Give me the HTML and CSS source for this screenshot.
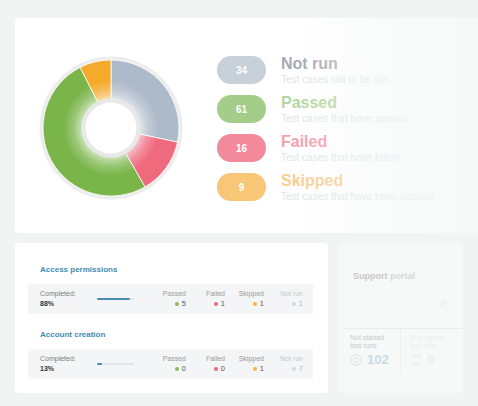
FILE: index.html
```html
<!DOCTYPE html>
<html lang="en">
<head>
<meta charset="utf-8">
<title>Test run overview</title>
<link rel="stylesheet" href="styles.css">
</head>
<body>
<div class="page">
  <section class="card summary">
    <div class="donut">
      <svg width="144" height="144" viewBox="0 0 144 144">
        <defs>
          <radialGradient id="glow" cx="72" cy="72" r="68" gradientUnits="userSpaceOnUse">
            <stop offset="0.43" stop-color="#fff" stop-opacity="0.6"/>
            <stop offset="0.55" stop-color="#fff" stop-opacity="0.25"/>
            <stop offset="0.70" stop-color="#fff" stop-opacity="0"/>
          </radialGradient>
        </defs>
        <circle cx="72" cy="72" r="71.5" fill="#ededed"/>
        <g stroke="#ffffff" stroke-width="0.8" stroke-linejoin="round">
          <path d="M72 72 L72 4 A68 68 0 0 1 138.51 86.14 Z" fill="#adbac9"/>
          <path d="M72 72 L138.51 86.14 A68 68 0 0 1 106 130.89 Z" fill="#f06a7d"/>
          <path d="M72 72 L106 130.89 A68 68 0 1 1 41.13 11.41 Z" fill="#7ab54a"/>
          <path d="M72 72 L41.13 11.41 A68 68 0 0 1 72 4 Z" fill="#f5aa2c"/>
        </g>
        <circle cx="72" cy="72" r="68" fill="url(#glow)"/>
        <circle cx="72" cy="72" r="29.8" fill="#e8e8e8"/>
        <circle cx="72" cy="72" r="25.5" fill="#ffffff"/>
      </svg>
    </div>
    <ul class="legend">
      <li class="legend-item">
        <span class="pill pill-notrun">34</span>
        <div class="legend-text">
          <div class="legend-title title-notrun">Not run</div>
          <div class="legend-sub">Test cases still to be run</div>
        </div>
      </li>
      <li class="legend-item">
        <span class="pill pill-passed">61</span>
        <div class="legend-text">
          <div class="legend-title title-passed">Passed</div>
          <div class="legend-sub">Test cases that have passed</div>
        </div>
      </li>
      <li class="legend-item">
        <span class="pill pill-failed">16</span>
        <div class="legend-text">
          <div class="legend-title title-failed">Failed</div>
          <div class="legend-sub">Test cases that have failed</div>
        </div>
      </li>
      <li class="legend-item">
        <span class="pill pill-skipped">9</span>
        <div class="legend-text">
          <div class="legend-title title-skipped">Skipped</div>
          <div class="legend-sub">Test cases that have been skipped</div>
        </div>
      </li>
    </ul>
    <div class="fade"></div>
  </section>

  <div class="bottom">
    <section class="card runs">
      <div class="group">
        <h3 class="group-title">Access permissions</h3>
        <div class="row">
          <div class="completed">
            <div class="completed-label">Completed:</div>
            <div class="completed-value">88%</div>
          </div>
          <div class="bar"><div class="bar-fill" style="width:88%"></div></div>
          <div></div>
          <div class="stat"><div class="stat-label">Passed</div><div class="stat-value"><i class="dot dot-passed"></i>5</div></div>
          <div class="stat"><div class="stat-label">Failed</div><div class="stat-value"><i class="dot dot-failed"></i>1</div></div>
          <div class="stat"><div class="stat-label">Skipped</div><div class="stat-value"><i class="dot dot-skipped"></i>1</div></div>
          <div class="stat stat-faint"><div class="stat-label">Not run</div><div class="stat-value"><i class="dot dot-notrun"></i>1</div></div>
        </div>
      </div>
      <div class="group">
        <h3 class="group-title">Account creation</h3>
        <div class="row">
          <div class="completed">
            <div class="completed-label">Completed:</div>
            <div class="completed-value">13%</div>
          </div>
          <div class="bar"><div class="bar-fill" style="width:13%"></div></div>
          <div></div>
          <div class="stat"><div class="stat-label">Passed</div><div class="stat-value"><i class="dot dot-passed"></i>0</div></div>
          <div class="stat"><div class="stat-label">Failed</div><div class="stat-value"><i class="dot dot-failed"></i>0</div></div>
          <div class="stat"><div class="stat-label">Skipped</div><div class="stat-value"><i class="dot dot-skipped"></i>1</div></div>
          <div class="stat stat-faint"><div class="stat-label">Not run</div><div class="stat-value"><i class="dot dot-notrun"></i>7</div></div>
        </div>
      </div>
    </section>

    <section class="card portal">
      <div class="portal-head">
        <h3 class="portal-title">Support <span class="portal-title-fade">portal</span></h3>
        <svg class="star" width="12" height="12" viewBox="0 0 12 12"><path d="M6 0.8 L7.6 4.2 L11.2 4.6 L8.5 7 L9.3 10.7 L6 8.8 L2.7 10.7 L3.5 7 L0.8 4.6 L4.4 4.2 Z" fill="#f0f1f2"/></svg>
      </div>
      <div class="portal-stats">
        <div class="pstat">
          <div class="pstat-label">Not started<br>test runs</div>
          <div class="pstat-value">
            <svg width="12" height="12" viewBox="0 0 12 12"><circle cx="6" cy="6" r="5.2" fill="none" stroke="#dce0e3" stroke-width="1"/><circle cx="6" cy="6" r="2.2" fill="none" stroke="#dce0e3" stroke-width="1"/></svg>
            <span class="pstat-num">102</span>
          </div>
        </div>
        <div class="pstat pstat-faint">
          <div class="pstat-label">In progress<br>test runs</div>
          <div class="pstat-value">
            <svg width="12" height="12" viewBox="0 0 12 12"><path d="M10.5 5 A4.6 4.6 0 0 0 2 3.6 M1.5 7 A4.6 4.6 0 0 0 10 8.4" fill="none" stroke="#eceeef" stroke-width="1.2"/></svg>
            <span class="pstat-num">9</span>
          </div>
        </div>
      </div>
    </section>
  </div>
</div>
</body>
</html>
```

FILE: styles.css
```css
* { box-sizing: border-box; }

html, body {
  margin: 0;
  padding: 0;
}

body {
  width: 478px;
  height: 406px;
  overflow: hidden;
  background: #f2f3f3;
  font-family: "Liberation Sans", Arial, Helvetica, sans-serif;
}

.page {
  padding: 18px 0 0 15px;
}

.card {
  background: #ffffff;
  border-radius: 4px;
}

/* ---------- summary card ---------- */
.summary {
  position: relative;
  width: 463px;
  height: 215px;
  display: flex;
  align-items: flex-start;
  padding: 38px 0 0 24px;
  gap: 34px;
  border-radius: 4px 0 0 4px;
  overflow: hidden;
}

.donut {
  width: 144px;
  height: 144px;
  flex: none;
}

.donut svg { display: block; }

.legend {
  list-style: none;
  margin: 0;
  padding: 0;
  display: flex;
  flex-direction: column;
  gap: 11px;
}

.legend-item {
  display: flex;
  align-items: flex-start;
  gap: 15px;
  height: 28px;
}

.pill {
  width: 49px;
  height: 28px;
  border-radius: 14px;
  display: flex;
  align-items: center;
  justify-content: center;
  color: #ffffff;
  font-size: 10px;
  font-weight: bold;
  flex: none;
}

.pill-notrun { background: #c8d0da; }
.pill-passed { background: #a4cd89; }
.pill-failed { background: #f28a9b; }
.pill-skipped { background: #f7c677; }

.legend-text {
  display: flex;
  flex-direction: column;
  white-space: nowrap;
}

.legend-title {
  font-size: 16px;
  line-height: 16px;
  font-weight: bold;
}

.title-notrun { color: #a6abb1; }
.title-passed { color: #b3d79e; }
.title-failed { color: #f5a0ae; }
.title-skipped { color: #f8cf93; }

.legend-sub {
  font-size: 10px;
  line-height: 12px;
  margin-top: 2px;
  color: #e1e4e7;
}

.fade {
  position: absolute;
  top: 0;
  right: 0;
  bottom: 0;
  width: 180px;
  background: linear-gradient(to right, rgba(246, 247, 247, 0) 0%, rgba(246, 247, 247, 0.55) 45%, rgba(246, 247, 247, 0.92) 100%);
}

/* ---------- bottom row ---------- */
.bottom {
  display: flex;
  gap: 10px;
  margin-top: 10px;
}

.runs {
  width: 313px;
  height: 150px;
  padding: 22px 15px 0 13px;
}

.group + .group { margin-top: 16px; }

.group-title {
  margin: 0 0 9px 12px;
  font-size: 8px;
  line-height: 10px;
  font-weight: bold;
  color: #3f8cb2;
}

.row {
  height: 30px;
  background: #f4f5f6;
  display: grid;
  grid-template-columns: 57px 37px 13px repeat(4, 39px);
  align-items: center;
  padding-left: 12px;
  font-size: 7px;
  line-height: 10px;
}

.completed-label { color: #7d7d7d; }
.completed-value { color: #333333; font-weight: bold; }

.bar {
  height: 2px;
  background: #dee4e9;
  border-radius: 1px;
}

.bar-fill {
  height: 2px;
  background: #4a8db3;
  border-radius: 1px;
}

.stat { text-align: right; }

.stat-label { color: #9c9c9c; }

.stat-value {
  color: #555555;
  font-size: 7.5px;
  display: flex;
  align-items: center;
  justify-content: flex-end;
  gap: 3px;
}

.stat-faint .stat-label { color: #c8c8c8; }
.stat-faint .stat-value { color: #b9b9b9; }

.dot {
  width: 4px;
  height: 4px;
  border-radius: 50%;
  display: inline-block;
}

.dot-passed { background: #86c04f; }
.dot-failed { background: #f06478; }
.dot-skipped { background: #f6b446; }
.dot-notrun { background: #d5dadf; }

/* ---------- portal card ---------- */
.portal {
  width: 125px;
  height: 150px;
  background: #f7f8f8;
  padding: 28px 0 0 0;
}

.portal-head {
  display: flex;
  justify-content: space-between;
  align-items: flex-start;
  padding: 0 14px 0 15px;
  height: 57px;
}

.portal-title {
  margin: 0;
  font-size: 9px;
  line-height: 11px;
  font-weight: bold;
  color: #c4c8cc;
}

.portal-title-fade { color: #d6d9dc; }

.star { margin-top: 26px; }

.portal-stats {
  margin-left: 5px;
  border-top: 1px solid #eaecee;
  display: flex;
}

.pstat {
  width: 58px;
  height: 45px;
  padding: 5px 0 0 7px;
  border-right: 1px solid #eff0f1;
}

.pstat-faint {
  border-right: none;
  padding-left: 9px;
}

.pstat-label {
  font-size: 7px;
  line-height: 8px;
  color: #c7cbce;
}

.pstat-faint .pstat-label { color: #eceeef; }

.pstat-value {
  display: flex;
  align-items: center;
  gap: 5px;
  margin-top: 2px;
}

.pstat-value svg { flex: none; }

.pstat-num {
  font-size: 13px;
  line-height: 16px;
  font-weight: bold;
  color: #c8dbe7;
}

.pstat-faint .pstat-num { color: #eceeef; }
```
